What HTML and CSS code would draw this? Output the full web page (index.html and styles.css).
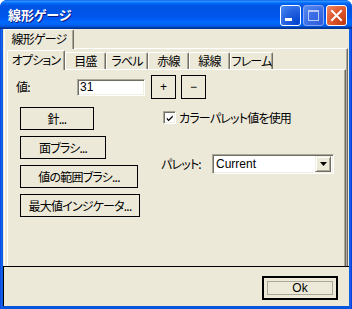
FILE: index.html
```html
<!DOCTYPE html>
<html>
<head>
<meta charset="utf-8">
<link rel="stylesheet" href="styles.css">
</head>
<body>
<div class="window">
  <div class="titlebar">
    <span class="title">線形ゲージ</span>
    <div class="tbtns">
      <span class="tb tb-min"><svg width="19" height="19" viewBox="0 0 19 19"><rect x="4" y="12" width="7" height="3" fill="#fff"/></svg></span>
      <span class="tb tb-max"><svg width="19" height="19" viewBox="0 0 19 19"><rect x="4.5" y="4.5" width="10" height="10" fill="none" stroke="#b9c9f3" stroke-width="1"/><rect x="4" y="4" width="11" height="2" fill="#b9c9f3"/></svg></span>
      <span class="tb tb-close"><svg width="19" height="19" viewBox="0 0 19 19"><path d="M5 5 L14 14 M14 5 L5 14" stroke="#fff" stroke-width="2" stroke-linecap="square"/></svg></span>
    </div>
  </div>
  <div class="client">
    <div class="outer">
      <div class="tabrow outer-row">
        <span class="tab sel outer-tab">線形ゲージ</span>
      </div>
      <div class="pane outer-pane">
        <div class="tabrow inner-row">
          <span class="tab sel t1">オプション</span>
          <span class="tab t2">目盛</span>
          <span class="tab t3">ラベル</span>
          <span class="tab t4">赤線</span>
          <span class="tab t5">緑線</span>
          <span class="tab t6">フレーム</span>
        </div>
        <div class="pane inner-pane">
          <div class="value-row">
            <span class="lbl">値:</span>
            <span class="edit">31</span>
            <span class="btn sq">+</span>
            <span class="btn sq">−</span>
          </div>
          <div class="cols">
            <div class="left-col">
              <span class="btn b1">針...</span>
              <span class="btn b2">面ブラシ...</span>
              <span class="btn b3">値の範囲ブラシ...</span>
              <span class="btn b4">最大値インジケータ...</span>
            </div>
            <div class="right-col">
              <div class="check-row">
                <span class="check"><svg width="11" height="11" viewBox="0 0 11 11"><path d="M2 4.5 L4 6.5 L8.5 2 L8.5 4 L4 8.5 L2 6.5 Z" fill="#000"/></svg></span>
                <span class="check-lbl">カラーパレット値を使用</span>
              </div>
              <div class="palette-row">
                <span class="pal-lbl">パレット:</span>
                <span class="combo">
                  <span class="combo-text">Current</span>
                  <span class="combo-btn"><svg width="7" height="4" viewBox="0 0 7 4"><path d="M0 0 H7 L3.5 4 Z" fill="#000"/></svg></span>
                </span>
              </div>
            </div>
          </div>
        </div>
      </div>
    </div>
    <div class="footer">
      <span class="ok"><span class="ok-inner">Ok</span></span>
    </div>
  </div>
</div>
</body>
</html>
```

FILE: styles.css
```css
* { box-sizing: border-box; }
html, body { margin: 0; padding: 0; }
body {
  width: 352px;
  height: 309px;
  overflow: hidden;
  background: #fff;
  font-family: "Noto Sans CJK JP", sans-serif;
  font-size: 12px;
  letter-spacing: -0.8px;
  font-feature-settings: "palt";
  color: #000;
}
.window {
  width: 352px;
  height: 309px;
  display: flex;
  flex-direction: column;
  background: linear-gradient(to right, #0831d9 0, #166aee 1px, #0855dd 3px, #0855dd 349px, #166aee 350px, #0831d9 352px);
  border-radius: 7px 7px 0 0;
  overflow: hidden;
}
.titlebar {
  height: 29px;
  flex: none;
  display: flex;
  align-items: flex-start;
  background: linear-gradient(to bottom, #0058ee 0%, #3593ff 4%, #288eff 6%, #127dff 8%, #036ffc 10%, #0262ee 14%, #0057e5 20%, #0054e3 24%, #0055eb 56%, #005bf5 66%, #026afe 76%, #0062ef 86%, #0052d6 92%, #0040ab 94%, #003092 100%);
}
.title {
  color: #fff;
  font-weight: bold;
  font-size: 13px;
  letter-spacing: 0;
  line-height: 16px;
  margin: 7px 0 0 8px;
  text-shadow: 1px 1px #0a1883;
}
.tbtns {
  margin: 5px 5px 0 auto;
  display: flex;
  gap: 2px;
}
.tb {
  width: 21px;
  height: 21px;
  border: 1px solid #fff;
  border-radius: 3px;
  display: block;
}
.tb svg { display: block; }
.tb-min {
  background: radial-gradient(circle at 90% 90%, #0043cf 0%, #2663e0 55%, #4d8af5 100%);
}
.tb-max {
  border-color: #8ba6ee;
  background: radial-gradient(circle at 90% 90%, #2f5fdc 0%, #3c6fe6 55%, #5b8ef2 100%);
}
.tb-close {
  background: radial-gradient(circle at 90% 90%, #c23a13 0%, #e0572d 55%, #ef8a6a 100%);
}
.client {
  flex: 1;
  margin: 0 3px 3px 3px;
  background: #ece9d8;
  display: flex;
  flex-direction: column;
  min-height: 0;
}
.outer {
  flex: 1;
  padding: 1px 1px 0 1px;
  display: flex;
  flex-direction: column;
  min-height: 0;
}
.tabrow {
  display: flex;
  align-items: flex-end;
  flex: none;
}
.outer-row { height: 18px; }
.inner-row { height: 19px; }
.tab {
  height: 17px;
  line-height: 15px;
  padding: 0;
  text-align: center;
  border-top: 1px solid #fff;
  border-left: 1px solid #fff;
  border-right: 1px solid #716f64;
  box-shadow: inset -1px 0 #aca899;
  border-radius: 2px 2px 0 0;
  white-space: nowrap;
  background: #ece9d8;
}
.tab.sel {
  height: 20px;
  margin-bottom: -1px;
  position: relative;
  z-index: 1;
  line-height: 17px;
}
.outer-tab { height: 19px; width: 70px; line-height: 16px; }
.t1 { width: 58px; }
.t2 { width: 41px; }
.t3 { width: 42px; }
.t4 { width: 41px; }
.t5 { width: 41px; }
.t6 { width: 43px; }
.pane {
  border-top: 1px solid #fff;
  border-left: 1px solid #fff;
  border-right: 1px solid #716f64;
  box-shadow: inset -1px 0 #aca899;
  flex: 1;
  min-height: 0;
}
.outer-pane {
  display: flex;
  flex-direction: column;
  padding: 1px 1px 0 2px;
}
.inner-pane {
  padding: 5px 0 0 8px;
}
.value-row {
  display: flex;
  align-items: center;
  height: 24px;
}
.lbl { width: 61px; line-height: 14px; }
.edit {
  width: 68px;
  height: 17px;
  background: #fff;
  border-top: 1px solid #aca899;
  border-left: 1px solid #aca899;
  border-right: 1px solid #fff;
  border-bottom: 1px solid #fff;
  box-shadow: inset 1px 1px #716f64, inset -1px -1px #f1efe2;
  font-family: "Liberation Sans", sans-serif;
  font-size: 12px;
  letter-spacing: 0;
  line-height: 15px;
  padding-left: 2px;
  margin-right: 6px;
}
.btn {
  display: flex;
  align-items: center;
  justify-content: center;
  border: 1px solid #000;
  background: #ece9d8;
  height: 23px;
  white-space: nowrap;
}
.sq {
  width: 25px;
  height: 24px;
  margin-right: 5px;
  font-family: "Liberation Sans", sans-serif;
  font-size: 12px;
  letter-spacing: 0;
}
.cols {
  display: flex;
  margin-top: 8px;
  padding-left: 4px;
}
.left-col {
  width: 141px;
  display: flex;
  flex-direction: column;
  align-items: flex-start;
  gap: 6px;
}
.b1 { width: 74px; }
.b2 { width: 86px; }
.b3 { width: 118px; }
.b4 { width: 120px; }
.right-col {
  display: flex;
  flex-direction: column;
}
.check-row {
  display: flex;
  align-items: center;
  margin-top: 4px;
  margin-left: 2px;
  height: 13px;
}
.check {
  width: 13px;
  height: 13px;
  background: #fff;
  border-top: 1px solid #aca899;
  border-left: 1px solid #aca899;
  border-right: 1px solid #fff;
  border-bottom: 1px solid #fff;
  box-shadow: inset 1px 1px #716f64, inset -1px -1px #f1efe2;
  display: flex;
  align-items: center;
  justify-content: center;
}
.check svg { display: block; margin: 1px 0 0 1px; }
.check-lbl { margin-left: 3px; line-height: 14px; }
.palette-row {
  display: flex;
  align-items: center;
  margin-top: 30px;
  height: 20px;
}
.pal-lbl { width: 51px; line-height: 14px; }
.combo {
  width: 122px;
  height: 20px;
  background: #fff;
  border-top: 1px solid #aca899;
  border-left: 1px solid #aca899;
  border-right: 1px solid #fff;
  border-bottom: 1px solid #fff;
  box-shadow: inset 1px 1px #716f64, inset -1px -1px #f1efe2;
  display: flex;
  align-items: center;
  padding: 2px;
}
.combo-text {
  flex: 1;
  font-family: "Liberation Sans", sans-serif;
  font-size: 12px;
  letter-spacing: 0;
  line-height: 14px;
  padding-left: 1px;
}
.combo-btn {
  width: 16px;
  height: 16px;
  background: #ece9d8;
  border-top: 1px solid #f1efe2;
  border-left: 1px solid #f1efe2;
  border-right: 1px solid #716f64;
  border-bottom: 1px solid #716f64;
  box-shadow: inset 1px 1px #fff, inset -1px -1px #aca899;
  display: flex;
  align-items: center;
  justify-content: center;
}
.combo-btn svg { display: block; }
.footer {
  flex: none;
  height: 40px;
  border-top: 1px solid #000;
  border-left: 1px solid #000;
  display: flex;
  justify-content: flex-end;
  align-items: flex-start;
  padding: 9px 11px 0 0;
  background: #ece9d8;
}
.ok {
  width: 76px;
  height: 24px;
  border: 2px solid #000;
  padding: 3px;
  display: block;
}
.ok-inner {
  display: flex;
  align-items: center;
  justify-content: center;
  height: 100%;
  border: 1px solid #aca899;
  font-family: "Liberation Sans", sans-serif;
  font-size: 12px;
  letter-spacing: 0;
}
```
